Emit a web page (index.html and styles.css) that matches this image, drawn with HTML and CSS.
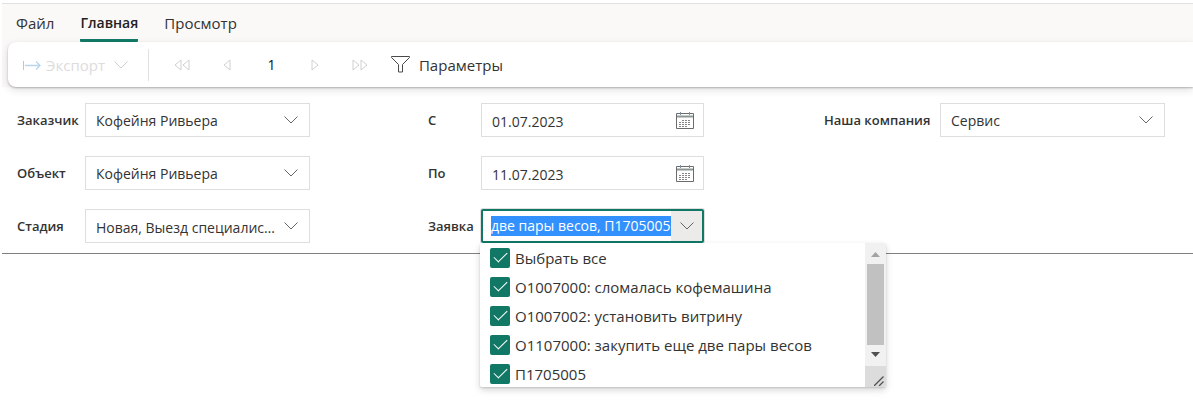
FILE: index.html
```html
<!DOCTYPE html>
<html lang="ru">
<head>
<meta charset="utf-8">
<meta name="viewport" content="width=device-width, initial-scale=1">
<title>Отчет</title>
<link rel="stylesheet" href="styles.css">
</head>
<body>
<header class="ribbon">
  <nav class="tabs">
    <button class="tab" type="button">Файл</button>
    <button class="tab tab-active" type="button">Главная</button>
    <button class="tab" type="button">Просмотр</button>
  </nav>
  <div class="toolbar">
    <button class="export" type="button" disabled>
      <svg width="20" height="14" viewBox="0 0 20 14" fill="none"><path d="M1.5 3v9" stroke="#c4c4c4"/><path d="M3 7.500h15M14 3.500l4 4-4 4" stroke="#b9d7ea" stroke-width="1.300"/></svg>
      <span>Экспорт</span>
      <svg class="export-arrow" width="14" height="8" viewBox="0 0 14 8" fill="none"><path d="M.5.5 7 7 13.500.5" stroke="#d0d0d0"/></svg>
    </button>
    <span class="separator"></span>
    <div class="pager">
      <button class="page-button" type="button" disabled aria-label="Первая страница"><svg width="16" height="12" viewBox="0 0 16 12" fill="none" stroke="#d0d0d0"><path d="M7 1v10L1 6zM15 1v10L9 6z"/></svg></button>
      <button class="page-button" type="button" disabled aria-label="Предыдущая страница"><svg width="16" height="12" viewBox="0 0 16 12" fill="none" stroke="#d0d0d0"><path d="M11 1v10L5 6z"/></svg></button>
      <input class="page-number" type="text" value="1" aria-label="Номер страницы">
      <button class="page-button" type="button" disabled aria-label="Следующая страница"><svg width="16" height="12" viewBox="0 0 16 12" fill="none" stroke="#d0d0d0"><path d="M5 1v10l6-5z"/></svg></button>
      <button class="page-button" type="button" disabled aria-label="Последняя страница"><svg width="16" height="12" viewBox="0 0 16 12" fill="none" stroke="#d0d0d0"><path d="M1 1v10l6-5zM9 1v10l6-5z"/></svg></button>
    </div>
    <button class="parameters" type="button">
      <svg width="19" height="17" viewBox="0 0 19 17" fill="none"><path d="M.5.5h18v1L11.500 8.500v7.500h-4V8.500L.5 1.500z" stroke="#4a4a4a"/></svg>
      <span>Параметры</span>
    </button>
  </div>
</header>
<main>
  <form class="filters">
    <div class="group group-client">
      <label for="customer">Заказчик</label>
      <div class="field"><select id="customer"><option>Кофейня Ривьера</option></select><svg class="chevron" width="14" height="8" viewBox="0 0 14 8"><path d="M.5.5 7 7 13.500.5"/></svg></div>
      <label for="object">Объект</label>
      <div class="field"><select id="object"><option>Кофейня Ривьера</option></select><svg class="chevron" width="14" height="8" viewBox="0 0 14 8"><path d="M.5.5 7 7 13.500.5"/></svg></div>
      <label for="stage">Стадия</label>
      <div class="field"><input id="stage" type="text" readonly value="Новая, Выезд специалиста, Выполнена"><svg class="chevron" width="14" height="8" viewBox="0 0 14 8"><path d="M.5.5 7 7 13.500.5"/></svg></div>
    </div>
    <div class="group group-period">
      <label for="from">С</label>
      <div class="field"><input id="from" type="text" value="01.07.2023"><button class="calendar" type="button" aria-label="Выбрать дату начала"><svg width="18" height="17" viewBox="0 0 18 17" fill="none"><path d="M.5 1.500h17v15H.5z" stroke="#6b6b6b"/><path d="M1 4.500h16" stroke="#8c9692" stroke-width="2"/><path d="M4.500 0v3M13.500 0v3" stroke="#7d8f96"/><path d="M6 8.500h9M3 10.500h12M3 12.500h12M3 14.500h9" stroke="#858585" stroke-dasharray="2 1"/></svg></button></div>
      <label for="to">По</label>
      <div class="field"><input id="to" type="text" value="11.07.2023"><button class="calendar" type="button" aria-label="Выбрать дату окончания"><svg width="18" height="17" viewBox="0 0 18 17" fill="none"><path d="M.5 1.500h17v15H.5z" stroke="#6b6b6b"/><path d="M1 4.500h16" stroke="#8c9692" stroke-width="2"/><path d="M4.500 0v3M13.500 0v3" stroke="#7d8f96"/><path d="M6 8.500h9M3 10.500h12M3 12.500h12M3 14.500h9" stroke="#858585" stroke-dasharray="2 1"/></svg></button></div>
      <label for="request">Заявка</label>
      <div class="field field-open">
        <input id="request" type="text" value="две пары весов, П1705005">
        <button class="open-button" type="button" aria-label="Свернуть список"><svg width="14" height="8" viewBox="0 0 14 8"><path d="M.5.5 7 7 13.500.5"/></svg></button>
        <div class="menu">
          <div class="options">
            <label class="option"><input type="checkbox" checked>Выбрать все</label>
            <label class="option"><input type="checkbox" checked>О1007000: сломалась кофемашина</label>
            <label class="option"><input type="checkbox" checked>О1007002: установить витрину</label>
            <label class="option"><input type="checkbox" checked>О1107000: закупить еще две пары весов</label>
            <label class="option"><input type="checkbox" checked>П1705005</label>
          </div>
          <div class="scrollbar">
            <svg width="9" height="5" viewBox="0 0 9 5"><path d="M0 5 4.500 0 9 5z" fill="#a3a3a3"/></svg>
            <div class="thumb"></div>
            <svg width="9" height="5" viewBox="0 0 9 5"><path d="M0 0 4.500 5 9 0z" fill="#505050"/></svg>
            <div class="resizer"><svg width="10" height="10" viewBox="0 0 10 10" stroke="#505050" stroke-width="1.300"><path d="M0 10 9.500.5M5 10l4.500-4.500"/></svg></div>
          </div>
        </div>
      </div>
    </div>
    <div class="group group-company">
      <label for="company">Наша компания</label>
      <div class="field"><select id="company"><option>Сервис</option></select><svg class="chevron" width="14" height="8" viewBox="0 0 14 8"><path d="M.5.5 7 7 13.500.5"/></svg></div>
    </div>
  </form>
</main>
</body>
</html>
```
FILE: styles.css
```css
* { box-sizing: border-box; }
body {
  min-height: 100vh;
  margin: 0;
  padding: 3px 0 0 2px;
  font: 14px/20px "Open Sans", "Noto Sans", sans-serif;
  color: #333;
  background: #fff;
}
button, input, select {
  margin: 0;
  padding: 0;
  border: 0;
  border-radius: 0;
  background: none;
  font: inherit;
  color: inherit;
  outline: 0;
}
svg { display: block; flex: none; }

.ribbon {
  padding-left: 6px;
  border-top: 1px solid #e1e1e1;
  background: #faf9f7;
}
.tabs {
  display: flex;
  gap: 26px;
  padding-left: 8px;
}
.tab {
  height: 38px;
  padding-top: 2px;
  border-bottom: 3px solid transparent;
  font-size: 15px;
}
.tab-active {
  border-color: #117865;
  border-radius: 1px;
  font-size: 14px;
  font-weight: 600;
  color: #222;
}
.toolbar {
  display: flex;
  align-items: center;
  height: 45px;
  padding-left: 14px;
  border-radius: 8px 0 0 8px;
  background: #fff;
  box-shadow: 0 1px 2px rgba(0, 0, 0, .25), 0 3px 8px rgba(0, 0, 0, .12);
  font-size: 15px;
}
.export, .parameters {
  display: flex;
  align-items: center;
  gap: 4px;
}
.export { color: #dcdcdc; }
.export-arrow { margin-left: 5px; }
.separator {
  width: 1px;
  height: 32px;
  margin-left: 20px;
  background: #e1e1e1;
}
.pager {
  display: flex;
  margin-left: 11px;
}
.page-button {
  display: grid;
  place-items: center;
  width: 45px;
}
.page-number {
  width: 43px;
  text-align: center;
  font-size: 14px;
  color: #111;
}
.parameters {
  gap: 9px;
  margin-left: 8px;
}

.filters {
  display: flex;
  justify-content: space-between;
  align-items: flex-start;
  gap: 20px;
  padding: 16px 28px 10px 15px;
  border-bottom: 1px solid #808080;
}
.group {
  display: grid;
  align-items: center;
  row-gap: 19px;
  font-size: 13px;
  font-weight: 600;
}
.group-client { grid-template-columns: 68px 225px; }
.group-period { grid-template-columns: 53px 223px; margin-right: 2px; }
.group-company { grid-template-columns: 116px 225px; }
.group label { white-space: nowrap; }
.field {
  display: flex;
  align-items: center;
  position: relative;
  height: 34px;
  border: 1px solid #dedede;
  font-size: 14px;
  font-weight: 400;
}
.field select, .field input[type="text"] {
  flex: 1;
  min-width: 0;
  height: 32px;
  padding: 2px 0 0 10px;
  appearance: none;
  text-overflow: ellipsis;
}
#stage { margin-right: 5px; }
.chevron, .open-button svg {
  fill: none;
  stroke: #666;
}
.chevron {
  margin-right: 11px;
  pointer-events: none;
}
.calendar { margin-right: 9px; }

.field-open {
  border: 2px solid #117865;
  border-radius: 2px;
  box-shadow: 0 0 0 1px #dedede;
}
.field.field-open #request {
  flex: none;
  width: 180px;
  height: 20px;
  margin-left: 8px;
  padding: 0;
  background: #3390ff;
  color: #fff;
  text-overflow: clip;
}
.open-button {
  flex: 1;
  display: grid;
  place-items: center;
  height: 30px;
  background: #edebe9;
}
.menu {
  display: flex;
  position: absolute;
  top: 32px;
  left: -3px;
  z-index: 1;
  width: 406px;
  height: 144px;
  overflow: hidden;
  border-radius: 2px;
  background: #fff;
  box-shadow: 0 3px 7px rgba(0, 0, 0, .16), 0 1px 2px rgba(0, 0, 0, .14);
}
.options {
  flex: 1;
  padding-left: 10px;
}
.option {
  display: flex;
  align-items: center;
  gap: 5px;
  height: 29px;
  font-size: 15px;
}
.option input {
  width: 20px;
  height: 20px;
  appearance: none;
  border-radius: 2px;
  background: #117865;
  display: grid;
  place-items: center;
}
.option input::after {
  content: "";
  width: 12px;
  height: 6px;
  margin-top: -4px;
  border: solid #fff;
  border-width: 0 0 1px 1px;
  transform: rotate(-45deg);
}
.scrollbar {
  display: flex;
  flex-direction: column;
  align-items: center;
  gap: 7px;
  width: 21px;
  padding-top: 9px;
  background: #f1f1f1;
}
.thumb {
  flex: 1;
  width: 17px;
  background: #c1c1c1;
}
.resizer {
  display: flex;
  justify-content: flex-end;
  align-items: flex-end;
  width: 21px;
  height: 21px;
  margin-top: 2px;
  padding: 0 2px 1px 0;
  background: #dcdcdc;
}
```
